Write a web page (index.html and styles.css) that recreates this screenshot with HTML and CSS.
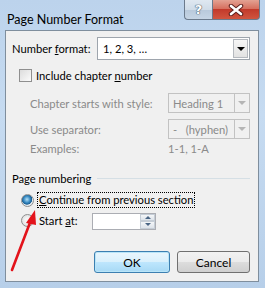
FILE: index.html
```html
<!DOCTYPE html>
<html lang="en">
<head>
    <meta charset="UTF-8">
    <title>Page Number Format</title>
    <link rel="stylesheet" href="styles.css">
</head>
<body>
    <div class="window">
        <div class="titlebar">
            <span class="title">Page Number Format</span>
            <div class="caption-btns">
                <span class="cap-btn help">?</span>
                <span class="cap-btn close">
                    <svg width="16" height="12" viewBox="0 0 16 12">
                        <path d="M3 2 L13 10 M13 2 L3 10" stroke="#5a1d1a" stroke-width="4.5" stroke-linecap="round"/>
                        <path d="M3 2 L13 10 M13 2 L3 10" stroke="#ffffff" stroke-width="2.6" stroke-linecap="round"/>
                    </svg>
                </span>
            </div>
        </div>
        <div class="client">
            <div class="row row-format">
                <span class="label">Number <u>f</u>ormat:</span>
                <div class="combo">
                    <span class="combo-text">1, 2, 3, …</span>
                    <span class="combo-drop"><span class="tri"></span></span>
                </div>
            </div>
            <div class="row row-check">
                <span class="checkbox"></span>
                <span>Include chapter <u>n</u>umber</span>
            </div>
            <div class="row row-sub row-style">
                <span class="sub-label">Chapter starts with style:</span>
                <div class="combo combo-off">
                    <span class="combo-text">Heading 1</span>
                    <span class="combo-drop"><span class="tri"></span></span>
                </div>
            </div>
            <div class="row row-sub row-sep">
                <span class="sub-label">Use separator:</span>
                <div class="combo combo-off">
                    <span class="combo-text">-&nbsp;&nbsp;&nbsp;(hyphen)</span>
                    <span class="combo-drop"><span class="tri"></span></span>
                </div>
            </div>
            <div class="row row-sub row-examples">
                <span class="sub-label">Examples:</span>
                <span class="examples">1-1, 1-A</span>
            </div>
            <div class="row row-group">
                <span>Page numbering</span>
                <span class="group-line"></span>
            </div>
            <div class="row row-radio row-continue">
                <span class="radio checked"></span>
                <span class="focus"><u>C</u>ontinue from previous section</span>
            </div>
            <div class="row row-radio row-start">
                <span class="radio"></span>
                <span class="start-label">Start <u>a</u>t:</span>
                <div class="spin">
                    <span class="spin-field"></span>
                    <span class="spin-btns">
                        <span class="spin-btn"><span class="tri-up"></span></span>
                        <span class="spin-btn"><span class="tri-down"></span></span>
                    </span>
                </div>
            </div>
            <div class="row row-buttons">
                <span class="btn btn-default">OK</span>
                <span class="btn btn-cancel">Cancel</span>
            </div>
        </div>
        <svg class="annotation" width="60" height="80" viewBox="0 0 60 80">
            <path d="M12 69 L31 19" stroke="#e3131b" stroke-width="2.6" stroke-linecap="round"/>
            <path d="M35 9 L26 22 L36 24 Z" fill="#e3131b"/>
        </svg>
    </div>
</body>
</html>
```

FILE: styles.css
```css
body {
    margin: 0;
    font-family: "Lato", "Liberation Sans", sans-serif;
    font-size: 11.2px;
    color: #000;
    background-color: #c4d8ee;
}
.window {
    position: relative;
    width: 265px;
    height: 288px;
    overflow: hidden;
    background: linear-gradient(180deg, #bcd3ec 0%, #c6dbf1 40%, #b7cfe9 100%);
}
.titlebar {
    display: flex;
    justify-content: space-between;
    align-items: flex-start;
    height: 30px;
    padding: 0 5px 0 7px;
}
.title {
    margin-top: 12px;
    font-size: 12.5px;
}
.caption-btns {
    display: flex;
}
.cap-btn {
    display: flex;
    justify-content: center;
    align-items: center;
    height: 20px;
    box-sizing: border-box;
    border: 1px solid #6b7a8c;
    border-top: none;
}
.help {
    width: 28px;
    border-radius: 0 0 0 4px;
    border-right: none;
    background: linear-gradient(180deg, #dfe8f1 0%, #d0dce8 50%, #b8c9db 51%, #c6d5e5 100%);
    color: #fff;
    font-family: "DejaVu Sans", sans-serif;
    font-weight: bold;
    font-size: 13px;
    text-shadow: 0 0 1px #4a5b6d, 0 0 1px #4a5b6d, 0 0 1px #4a5b6d;
}
.close {
    width: 48px;
    border-radius: 0 0 4px 0;
    background: linear-gradient(180deg, #e3a293 0%, #d6705f 45%, #c23a2b 50%, #d0553f 100%);
}
.client {
    display: flex;
    flex-direction: column;
    width: 254px;
    height: 252px;
    margin-left: 5px;
    box-sizing: border-box;
    border: 1px solid #7f8e9d;
    background-color: #f0f0f0;
    padding: 0 8px 0 6px;
}
.row {
    display: flex;
    align-items: center;
}
.row-format {
    height: 23px;
    margin-top: 6px;
}
.label {
    width: 85px;
}
.combo {
    display: flex;
    flex: 1;
    height: 100%;
    box-sizing: border-box;
    border: 1px solid #9ea5ad;
    background-color: #fff;
    padding: 1px;
}
.combo-text {
    flex: 1;
    padding-left: 4px;
    display: flex;
    align-items: center;
}
.combo-drop {
    display: flex;
    justify-content: center;
    align-items: center;
    width: 15px;
    box-sizing: border-box;
    border: 1px solid #b5b9bf;
    background: linear-gradient(180deg, #f6f6f6, #e2e2e2);
}
.tri {
    width: 0;
    height: 0;
    border-left: 4px solid transparent;
    border-right: 4px solid transparent;
    border-top: 4px solid #000;
}
.row-check {
    height: 20px;
    margin-top: 5px;
    padding-left: 7px;
}
.checkbox {
    width: 11px;
    height: 11px;
    border: 1px solid #8f8f8f;
    background: linear-gradient(135deg, #dcdcdc, #fbfbfb);
    margin-right: 4px;
}
.row-sub {
    height: 20px;
    color: #8a8a8a;
    padding-left: 18px;
}
.sub-label {
    width: 138px;
}
.row-style {
    margin-top: 8px;
}
.row-sep {
    margin-top: 6px;
}
.combo-off {
    border-color: #c2c2c2;
    background-color: #f0f0f0;
    padding: 0;
}
.combo-off .combo-drop {
    border: none;
    border-left: 1px solid #c2c2c2;
    background: none;
}
.combo-off .tri {
    border-top-color: #b5b5b5;
}
.row-examples {
    height: 16px;
    margin-top: 1px;
}
.row-group {
    height: 16px;
    margin-top: 14px;
}
.group-line {
    flex: 1;
    height: 0;
    border-top: 1px solid #d5dfe5;
    margin-left: 6px;
}
.row-radio {
    height: 20px;
    padding-left: 9px;
}
.row-continue {
    margin-top: 4px;
}
.radio {
    width: 11px;
    height: 11px;
    border-radius: 50%;
    border: 1px solid #8e8f8f;
    background: radial-gradient(circle, #f4f4f4 30%, #d6d6d6 100%);
    margin-right: 4px;
}
.radio.checked {
    background: radial-gradient(circle at 45% 40%, #b6e1f7 0%, #3c8dc4 35%, #1a5f94 55%, #e9eef2 62%, #dadada 100%);
}
.focus {
    outline: 1px dotted #000;
    padding: 0 1px;
    line-height: 14px;
}
.start-label {
    width: 53px;
    padding-left: 1px;
}
.spin {
    display: flex;
    width: 64px;
    height: 17px;
    margin-top: 2px;
    box-sizing: border-box;
    border: 1px solid #abadb3;
    background-color: #fff;
}
.spin-field {
    flex: 1;
}
.spin-btns {
    display: flex;
    flex-direction: column;
    width: 15px;
}
.spin-btn {
    flex: 1;
    display: flex;
    justify-content: center;
    align-items: center;
    border: 1px solid #c5cdd6;
    background: linear-gradient(180deg, #f4f6f8, #dde3ea);
}
.tri-up, .tri-down {
    width: 0;
    height: 0;
    border-left: 3px solid transparent;
    border-right: 3px solid transparent;
}
.tri-up {
    border-bottom: 3px solid #4a6584;
}
.tri-down {
    border-top: 3px solid #4a6584;
}
.row-buttons {
    justify-content: flex-end;
    gap: 7px;
    height: 22px;
    margin-top: 21px;
}
.btn {
    display: flex;
    justify-content: center;
    align-items: center;
    flex: none;
    width: 73px;
    height: 22px;
    box-sizing: border-box;
    font-size: 12px;
    color: #000;
    border: 1px solid #707070;
    border-radius: 3px;
    background: linear-gradient(180deg, #f2f2f2 0%, #ebebeb 50%, #dddddd 51%, #cfcfcf 100%);
}
.btn-default {
    width: 76px;
    border-color: #3c7fb1;
    box-shadow: inset 0 0 0 1px #b9e5f8;
    background: linear-gradient(180deg, #eaf6fd 0%, #d9f0fc 50%, #bee6fd 51%, #a7d9f5 100%);
}
.annotation {
    position: absolute;
    left: 0;
    top: 201px;
}
```
